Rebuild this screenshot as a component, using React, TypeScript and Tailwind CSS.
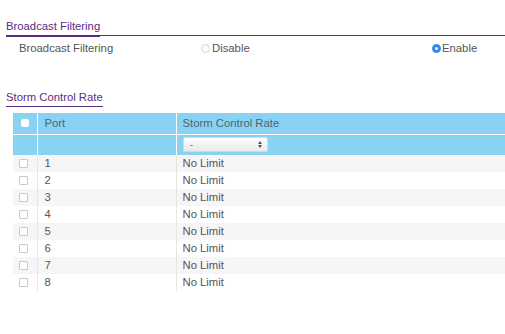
import { useState } from "react";

const ports = [1, 2, 3, 4, 5, 6, 7, 8];

function Radio({ checked }: { checked: boolean }) {
  return checked ? (
    <span className="inline-block size-[9px] rounded-full bg-[#2f7de1] border-[2.5px] border-[#3b8ae8] relative">
      <span className="absolute inset-[1px] rounded-full bg-white" />
    </span>
  ) : (
    <span className="inline-block size-[9px] rounded-full border border-[#d6d6d6] bg-[#fafafa]" />
  );
}

export default function App() {
  const [enabled, setEnabled] = useState(true);

  return (
    <div
      className="w-[505px] h-[334px] bg-white text-[11.3px] text-[#555] overflow-hidden"
      style={{ fontFamily: '"Liberation Sans", Arial, sans-serif' }}
    >
      {/* Broadcast Filtering */}
      <div className="pt-[19px] pl-[6px]">
        <div className="relative border-b border-[#4b3a68] h-[17px]">
          <span className="absolute left-0 bottom-[-1.5px] text-[#5a2d82] border-b-2 border-[#5a2d82] leading-[14px] pb-[2px]">
            Broadcast Filtering
          </span>
        </div>
      </div>
      <div className="grid grid-cols-[201px_231px_1fr] items-center h-[24px]">
        <div className="pl-[19px]">Broadcast Filtering</div>
        <label className="flex items-center gap-[2px] cursor-pointer" onClick={() => setEnabled(false)}>
          <Radio checked={!enabled} />
          <span>Disable</span>
        </label>
        <label className="flex items-center gap-[1px] cursor-pointer" onClick={() => setEnabled(true)}>
          <Radio checked={enabled} />
          <span>Enable</span>
        </label>
      </div>

      {/* Storm Control Rate */}
      <div className="pl-[6px] mt-[29px]">
        <span className="inline-block text-[#5a2d82] border-b-[1.5px] border-[#5a2d82] leading-[14px] pb-[2px]">
          Storm Control Rate
        </span>
      </div>

      <table className="ml-[13px] mt-[6px] w-[492px] border-collapse table-fixed">
        <colgroup>
          <col className="w-[24px]" />
          <col className="w-[139px]" />
          <col />
        </colgroup>
        <thead>
          <tr className="bg-[#8ad2f2] h-[21px] text-[#4e6577]">
            <th className="border-r border-white font-normal">
              <span className="block mx-auto size-[8px] rounded-[2px] bg-white" />
            </th>
            <th className="border-r border-white font-normal text-left pl-[7px]">Port</th>
            <th className="font-normal text-left pl-[6px]">Storm Control Rate</th>
          </tr>
          <tr className="bg-[#8ad2f2] h-[21px] border-t border-white">
            <th className="border-r border-white" />
            <th className="border-r border-white" />
            <th className="text-left pl-[6px] font-normal">
              <div className="w-[85px] h-[15px] rounded-[2px] bg-gradient-to-b from-white to-[#e9e9e9] border border-[#d8d8d8] flex items-center justify-between pl-[6px] pr-[5px] text-[#888]">
                <span className="leading-none">-</span>
                <span className="flex flex-col items-center gap-[1px]">
                  <span className="block w-0 h-0 border-x-[2.5px] border-x-transparent border-b-[3px] border-b-[#555]" />
                  <span className="block w-0 h-0 border-x-[2.5px] border-x-transparent border-t-[3px] border-t-[#555]" />
                </span>
              </div>
            </th>
          </tr>
        </thead>
        <tbody>
          {ports.map((p, i) => (
            <tr key={p} className={`h-[17px] ${i % 2 === 0 ? "bg-[#f6f6f6]" : "bg-white"}`}>
              <td className="border-r border-[#e6e6e6]">
                <span className="block ml-[6px] size-[9px] rounded-[1px] border border-[#c9c9c9] bg-white" />
              </td>
              <td className="border-r border-[#e6e6e6] pl-[7px]">{p}</td>
              <td className="pl-[6px]">No Limit</td>
            </tr>
          ))}
        </tbody>
      </table>
    </div>
  );
}
